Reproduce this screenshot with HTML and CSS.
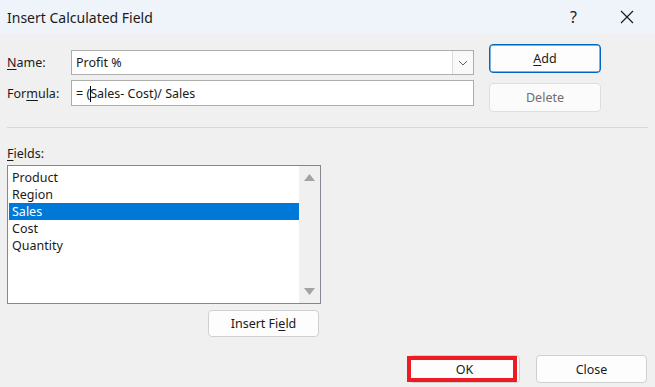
FILE: index.html
```html
<!DOCTYPE html>
<html lang="en">
<head>
  <meta charset="UTF-8">
  <title>Insert Calculated Field</title>
  <link rel="stylesheet" href="styles.css">
</head>
<body>
  <div class="dialog">
    <div class="titlebar">
      <span class="title">Insert Calculated Field</span>
      <span class="help">?</span>
      <svg class="close-x" width="14" height="14" viewBox="0 0 14 14">
        <path d="M1 1 L13 13 M13 1 L1 13" stroke="#1a1a1a" stroke-width="1.2" fill="none"/>
      </svg>
    </div>

    <div class="top">
      <div class="form">
        <label class="lbl"><u>N</u>ame:</label>
        <div class="combo">
          <span class="value">Profit %</span>
          <span class="drop">
            <svg width="10" height="6" viewBox="0 0 10 6"><path d="M1 1 L5 5 L9 1" stroke="#606060" fill="none"/></svg>
          </span>
        </div>
        <label class="lbl">For<u>m</u>ula:</label>
        <div class="textbox">
          <span class="value">= (<span class="caret"></span>Sales- Cost)/ Sales</span>
        </div>
      </div>
      <div class="side">
        <button class="btn primary"><u>A</u>dd</button>
        <button class="btn disabled">Delete</button>
      </div>
    </div>

    <div class="sep"></div>

    <div class="fields">
      <div class="lbl"><u>F</u>ields:</div>
      <div class="listbox">
        <ul class="items">
          <li>Product</li>
          <li>Region</li>
          <li class="sel">Sales</li>
          <li>Cost</li>
          <li>Quantity</li>
        </ul>
        <div class="scroll">
          <svg width="11" height="7" viewBox="0 0 11 7"><path d="M5.5 0 L11 7 L0 7 Z" fill="#a3a3a3"/></svg>
          <svg width="11" height="7" viewBox="0 0 11 7"><path d="M0 0 L11 0 L5.5 7 Z" fill="#a3a3a3"/></svg>
        </div>
      </div>
      <div class="insert-row">
        <button class="btn insert">Insert Fi<u>e</u>ld</button>
      </div>
    </div>

    <div class="footer">
      <div class="ok-wrap">
        <button class="btn ok">OK</button>
        <div class="highlight"></div>
      </div>
      <button class="btn close">Close</button>
    </div>
  </div>
</body>
</html>
```

FILE: styles.css
```css
body {
  margin: 0;
  background: #f0f0f0;
  font-family: "Noto Sans", "Open Sans", sans-serif;
  font-size: 12.5px;
  color: #1a1a1a;
}

.dialog {
  width: 655px;
  height: 387px;
  overflow: hidden;
  display: flex;
  flex-direction: column;
}

.titlebar {
  height: 34px;
  background: #eff3fa;
  display: flex;
  align-items: center;
  padding-left: 7px;
  padding-right: 21px;
  box-sizing: border-box;
}

.title {
  font-size: 14px;
  flex: 1;
}

.help {
  font-size: 16px;
  margin-right: 43px;
}

.close-x {
  display: block;
}

.top {
  display: flex;
  padding: 10px 0 0 7px;
}

.form {
  display: grid;
  grid-template-columns: 64px 403px;
  grid-template-rows: 25px 26px;
  row-gap: 5px;
  margin-top: 6px;
  align-items: center;
}

.lbl u, .btn u {
  text-decoration-thickness: 1px;
  text-underline-offset: 2px;
}

.combo, .textbox {
  height: 100%;
  box-sizing: border-box;
  background: #fff;
  border: 1px solid #adadad;
  display: flex;
  align-items: center;
  padding-left: 4px;
}

.combo .value {
  flex: 1;
}

.drop {
  width: 20px;
  height: 100%;
  background: #f9f9f9;
  border-left: 1px solid #dcdcdc;
  display: flex;
  align-items: center;
  justify-content: center;
}

.caret {
  display: inline-block;
  width: 1px;
  height: 16px;
  background: #000;
  vertical-align: -4px;
  margin-right: -1px;
}

.side {
  display: flex;
  flex-direction: column;
  gap: 10px;
  margin-left: 15px;
}

.btn {
  font-family: inherit;
  font-size: 12.5px;
  color: #1a1a1a;
  background: #fdfdfd;
  border: 1px solid #d0d0d0;
  border-radius: 4px;
  padding: 0;
  box-sizing: border-box;
}

.side .btn {
  width: 112px;
  height: 29px;
}

.btn.primary {
  border: 1px solid #0067c0;
  box-shadow: inset 0 0 0 0.5px #0067c0;
}

.btn.disabled {
  color: #6e6e6e;
  background: #fbfbfb;
  border-color: #dedede;
}

.sep {
  height: 1px;
  background: #d8d8d8;
  margin: 15px 7px 0 7px;
}

.fields {
  padding: 18px 0 0 7px;
  display: flex;
  flex-direction: column;
}

.fields .lbl {
  line-height: 16px;
}

.listbox {
  margin-top: 3px;
  width: 314px;
  height: 139px;
  box-sizing: border-box;
  border: 1px solid #828790;
  background: #fff;
  display: flex;
}

.items {
  list-style: none;
  margin: 0;
  padding: 3px 0 0 1px;
  flex: 1;
}

.items li {
  height: 17px;
  line-height: 17px;
  padding-left: 3px;
}

.items li.sel {
  background: #0078d7;
  color: #fff;
}

.scroll {
  width: 21px;
  background: #f0f0f0;
  display: flex;
  flex-direction: column;
  align-items: center;
  justify-content: space-between;
  padding: 8px 0 8px;
}

.insert-row {
  display: flex;
  padding-left: 201px;
  margin-top: 6px;
}

.btn.insert {
  width: 111px;
  height: 27px;
}

.footer {
  display: flex;
  justify-content: flex-end;
  gap: 16px;
  padding: 18px 8px 0 0;
}

.ok-wrap {
  position: relative;
}

.footer .btn {
  width: 111px;
  height: 28px;
}

.highlight {
  position: absolute;
  left: -2px;
  top: 1px;
  width: 110px;
  height: 26px;
  border: 4px solid #ed1c24;
  box-sizing: border-box;
}
```
